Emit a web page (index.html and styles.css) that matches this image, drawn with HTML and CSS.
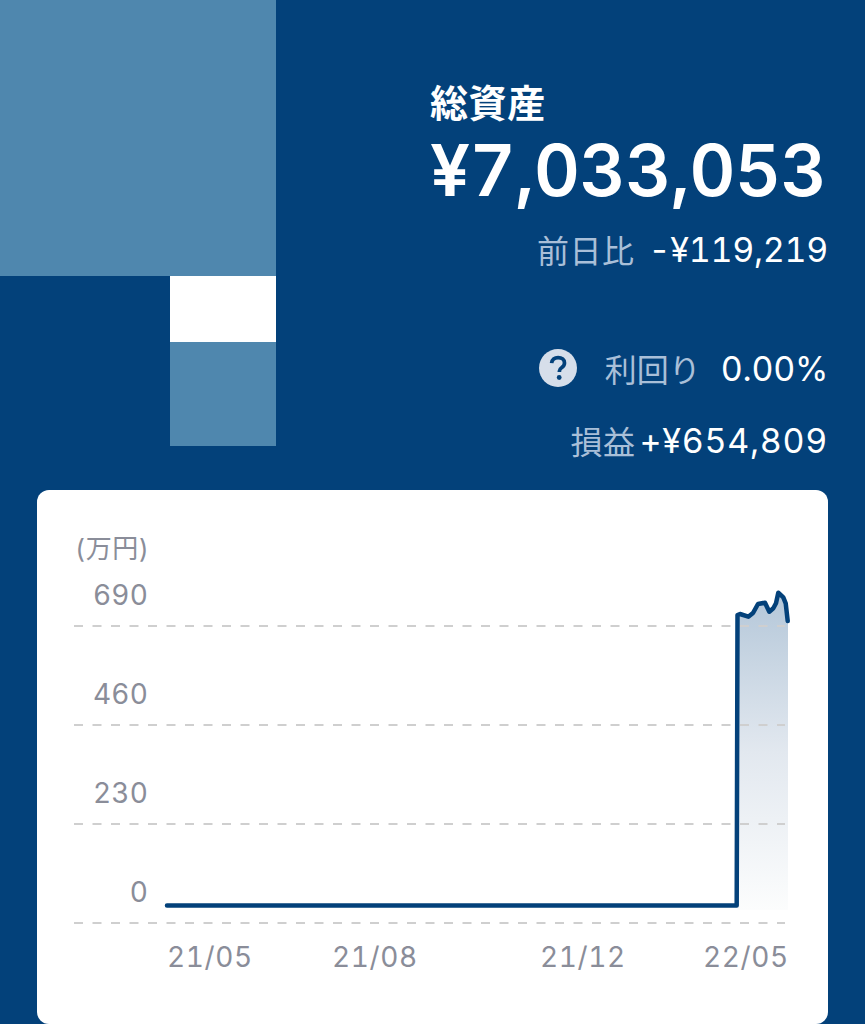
FILE: index.html
```html
<!DOCTYPE html>
<html lang="ja">
<head>
<meta charset="utf-8">
<title>総資産</title>
<link rel="stylesheet" href="styles.css">
</head>
<body>
<main class="page">
  <section class="hero">
    <div class="blocks">
      <div class="block-large"></div>
      <div class="block-white"></div>
      <div class="block-small"></div>
    </div>
    <div class="summary">
      <div class="total">
        <div class="total-label">総資産</div>
        <div class="total-value">¥7,033,053</div>
      </div>
      <div class="row row-day"><span class="label">前日比</span><span class="value">-¥119,219</span></div>
      <div class="row row-yield">
        <svg class="help" viewBox="0 0 38 38" aria-hidden="true"><circle cx="19" cy="19" r="19" fill="#d6deea"/><path d="M12.600 14.200c.3-3.600 3-5.600 6.500-5.600 3.700 0 6.400 2.100 6.400 5.300 0 2.400-1.300 3.600-3 4.800-1.500 1-2.100 1.700-2.100 3.400v.9" fill="none" stroke="#03417a" stroke-width="3.700"/><circle cx="20.200" cy="28.500" r="2.400" fill="#03417a"/></svg>
        <span class="label label-yield">利回り</span><span class="value">0.00%</span>
      </div>
      <div class="row row-profit"><span class="label">損益</span><span class="value value-profit">+¥654,809</span></div>
    </div>
  </section>
  <section class="card">
    <svg class="chart" viewBox="37 490 791 534" width="791" height="534">
      <defs>
        <linearGradient id="area" x1="0" y1="0" x2="0" y2="1">
          <stop offset="0" stop-color="#b4c7d9"/>
          <stop offset="0.5" stop-color="#e2e8ef"/>
          <stop offset="1" stop-color="#fcfdfd"/>
        </linearGradient>
      </defs>
      <path d="M737 615 740 614 748.300 616.700 753 613 758 604 765 602.700 769.300 611.700 773.300 608.300 776 603.300 778.300 592.700 783.300 597.300 785.700 603.300 788 621V910H737Z" fill="url(#area)"/>
      <g class="grid">
        <line x1="74" x2="785" y1="626" y2="626"/>
        <line x1="74" x2="785" y1="725" y2="725"/>
        <line x1="74" x2="785" y1="824" y2="824"/>
        <line x1="74" x2="785" y1="923" y2="923"/>
      </g>
      <path class="line" d="M167 905.500H736.700L737.500 615 740 614 748.300 616.700 753 613 758 604 765 602.700 769.300 611.700 773.300 608.300 776 603.300 778.300 592.700 783.300 597.300 785.700 603.300 787.700 621"/>
      <text class="axis unit" x="75" y="558">(万円)</text>
      <text class="axis end" x="148" y="605">690</text>
      <text class="axis end" x="148" y="704">460</text>
      <text class="axis end" x="148" y="803">230</text>
      <text class="axis end" x="148" y="902">0</text>
      <text class="axis" x="167" y="967">21/05</text>
      <text class="axis" x="332" y="967">21/08</text>
      <text class="axis" x="540" y="967">21/12</text>
      <text class="axis" x="703" y="967">22/05</text>
    </svg>
  </section>
</main>
</body>
</html>
```
FILE: styles.css
```css
html, body {
  margin: 0;
  padding: 0;
  background: #03417a;
}

.page {
  width: 865px;
  height: 1024px;
  overflow: hidden;
  background: #03417a;
  font-family: Inter, "Noto Sans CJK JP", sans-serif;
  font-feature-settings: "tnum";
}

.hero {
  height: 490px;
  display: flex;
  justify-content: space-between;
}

.blocks {
  width: 276px;
  display: flex;
  flex-direction: column;
  align-items: flex-end;
}

.block-large {
  width: 276px;
  height: 276px;
  background: #4f87ae;
}

.block-white {
  width: 106px;
  height: 66px;
  background: #fff;
}

.block-small {
  width: 106px;
  height: 104px;
  background: #4f87ae;
}

.summary {
  width: 435px;
  padding-right: 38px;
  box-sizing: border-box;
  display: flex;
  flex-direction: column;
  color: #fff;
}

.total {
  padding-top: 76px;
}

.total-label {
  height: 54px;
  font-size: 38px;
  line-height: 54px;
  font-weight: 700;
  letter-spacing: 0.6px;
}

.total-value {
  margin-top: 1px;
  height: 78px;
  font-size: 71px;
  line-height: 78px;
  font-weight: 600;
  letter-spacing: -0.35px;
  white-space: nowrap;
}

.row {
  display: flex;
  justify-content: flex-end;
  align-items: center;
  height: 46px;
  font-size: 34px;
}

.row-day { margin-top: 17px; }
.row-yield { margin-top: 73px; }
.row-profit { margin-top: 26px; }

.label {
  color: #a9bfd8;
  font-size: 32px;
  letter-spacing: 0.5px;
  margin-right: 14px;
}

.label-yield {
  letter-spacing: 0;
  margin-right: 20px;
}

.row-profit .label { margin-right: 4px; }

.value {
  font-weight: 400;
  letter-spacing: -0.3px;
  margin-right: -1px;
}

.value-profit {
  letter-spacing: 0.7px;
}

.help {
  width: 38px;
  height: 38px;
  margin-right: 28px;
}

.card {
  margin-left: 37px;
  width: 791px;
  height: 534px;
  background: #fff;
  border-radius: 12px;
  overflow: hidden;
}

.chart {
  display: block;
}

.grid line {
  stroke: #cfcfcf;
  stroke-width: 2;
  stroke-dasharray: 9 9.500;
}

.line {
  fill: none;
  stroke: #03417a;
  stroke-width: 4.500;
  stroke-linejoin: round;
  stroke-linecap: round;
}

.axis {
  font-family: Inter, "Noto Sans CJK JP", sans-serif;
  font-size: 28px;
  letter-spacing: 0.6px;
  fill: #8a8d99;
}

.axis.end {
  text-anchor: end;
  letter-spacing: 0.2px;
}

.axis.unit {
  font-size: 26px;
  letter-spacing: 0.5px;
}
```
